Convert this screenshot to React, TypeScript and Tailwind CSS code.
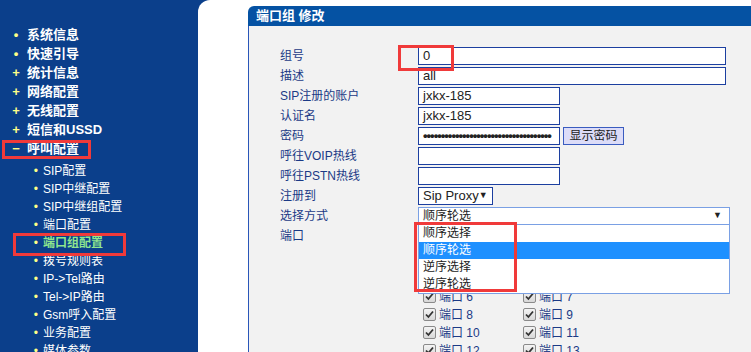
import React from 'react';

const topMenu: { icon: string; label: string }[] = [
  { icon: '•', label: '系统信息' },
  { icon: '•', label: '快速引导' },
  { icon: '+', label: '统计信息' },
  { icon: '+', label: '网络配置' },
  { icon: '+', label: '无线配置' },
  { icon: '+', label: '短信和USSD' },
  { icon: '−', label: '呼叫配置' },
];

const subMenu = [
  'SIP配置',
  'SIP中继配置',
  'SIP中继组配置',
  '端口配置',
  '端口组配置',
  '拨号规则表',
  'IP->Tel路由',
  'Tel->IP路由',
  'Gsm呼入配置',
  '业务配置',
  '媒体参数',
];

const options = ['顺序选择', '顺序轮选', '逆序选择', '逆序轮选'];

function Checkbox() {
  return (
    <span className="w-[13px] h-[13px] rounded-[2px] border border-[#8a8a8a] bg-gradient-to-b from-[#f4f4f4] to-[#d8d8d8] flex items-center justify-center">
      <svg width="11" height="11" viewBox="0 0 11 11">
        <path d="M2 5.5 L4.4 8 L9 2.5" fill="none" stroke="#333" strokeWidth="1.8" />
      </svg>
    </span>
  );
}

function Row({ label, children }: { label: string; children?: React.ReactNode }) {
  return (
    <div className="flex items-center h-5">
      <div className="w-[138px] text-[12px] text-[#1b3a86]">{label}</div>
      {children}
    </div>
  );
}

const inputCls = 'h-[18px] border border-[#1c3fa0] bg-white px-[4px] text-[13px] text-[#222] flex items-center whitespace-nowrap';

export default function App() {
  return (
    <div className="relative w-[751px] h-[352px] overflow-hidden bg-[#0b3f8b] flex" style={{ fontFamily: '"Liberation Sans", "Noto Sans CJK SC", sans-serif' }}>
      <div className="w-[198px] shrink-0 pt-[25px]">
        {topMenu.map(m => (
          <div key={m.label} className="flex items-center h-[19px]">
            <span className="w-[27px] text-center text-[#ffff88] font-bold text-[13px] pl-[5px]">{m.icon}</span>
            <span className="text-white font-bold text-[13px]">{m.label}</span>
          </div>
        ))}
        <div className="pt-[4px]">
          {subMenu.map(s => (
            <div key={s} className="flex items-center h-[18px]">
              <span className="w-[43px] text-right pr-[5px] text-[#ffff88] text-[12px]">•</span>
              <span className={s === '端口组配置' ? 'text-[#8ee68e] font-bold text-[12px]' : 'text-white text-[12px]'}>{s}</span>
            </div>
          ))}
        </div>
      </div>

      <div className="flex-1 bg-white rounded-tl-[12px] pl-[50px] pt-[6px]">
        <div className="h-full flex flex-col">
          <div className="h-[24px] bg-[#0552a3] rounded-tl-[6px] flex items-center pl-[8px] text-white font-bold text-[13px]">
            端口组 修改
          </div>
          <div className="flex-1 bg-[#f2f2f2] border-l border-[#2a56b8] pl-[31px] pt-[20px]">
            <Row label="组号">
              <div className={`${inputCls} w-[308px]`}>0</div>
            </Row>
            <Row label="描述">
              <div className={`${inputCls} w-[308px]`}>all</div>
            </Row>
            <Row label="SIP注册的账户">
              <div className={`${inputCls} w-[142px]`}>jxkx-185</div>
            </Row>
            <Row label="认证名">
              <div className={`${inputCls} w-[142px]`}>jxkx-185</div>
            </Row>
            <Row label="密码">
              <div className={`${inputCls} w-[142px] overflow-hidden text-[11px] tracking-[-1px] font-bold`}>••••••••••••••••••••••••••••••••••••</div>
              <div className="ml-[3px] h-[18px] w-[61px] border border-[#3a5cc0] bg-[#dcdcf8] text-[12px] text-[#222] flex items-center justify-center">显示密码</div>
            </Row>
            <Row label="呼往VOIP热线">
              <div className={`${inputCls} w-[142px]`}></div>
            </Row>
            <Row label="呼往PSTN热线">
              <div className={`${inputCls} w-[142px]`}></div>
            </Row>
            <Row label="注册到">
              <div className={`${inputCls} w-[75px] justify-between pr-[6px]`}>
                <span>Sip Proxy</span>
                <span className="text-[9px]">▼</span>
              </div>
            </Row>
            <Row label="选择方式">
              <div className="relative h-[18px] w-[312px] border border-[#7aa0e4] bg-white pl-[4px] pr-[7px] text-[12px] text-[#222] flex items-center justify-between">
                <span>顺序轮选</span>
                <span className="text-[9px]">▼</span>
                <div className="absolute left-[-1px] top-[16px] w-[312px] border border-[#7aa0e4] bg-white z-10">
                  {options.map(o => (
                    <div key={o} className={o === '顺序轮选' ? 'h-[17px] pl-[4px] flex items-center text-[12px] bg-[#1e90ff] text-white' : 'h-[17px] pl-[4px] flex items-center text-[12px] text-[#222]'}>{o}</div>
                  ))}
                </div>
              </div>
            </Row>
            <div className="flex">
              <div className="w-[138px] h-5 flex items-center text-[12px] text-[#1b3a86]">端口</div>
              <div className="pt-[8px] pl-[5px] grid grid-cols-[100px_100px]">
                {Array.from({ length: 14 }, (_, i) => (
                  <div key={i} className="h-[18px] flex items-center gap-[3px]">
                    <Checkbox />
                    <span className="text-[12px] text-[#1b3a86]">端口 {i}</span>
                  </div>
                ))}
              </div>
            </div>
          </div>
        </div>
      </div>

      <div className="absolute left-[398px] top-[45px] w-[56px] h-[26px] border-[3px] border-[#f03a3a]" />
      <div className="absolute left-[414px] top-[222px] w-[103px] h-[70px] border-[3px] border-[#f03a3a] z-20" />
      <div className="absolute left-[2px] top-[140px] w-[89px] h-[19px] border-[3px] border-[#f03a3a]" />
      <div className="absolute left-[13px] top-[233px] w-[113px] h-[23px] border-[3px] border-[#f03a3a]" />
    </div>
  );
}
